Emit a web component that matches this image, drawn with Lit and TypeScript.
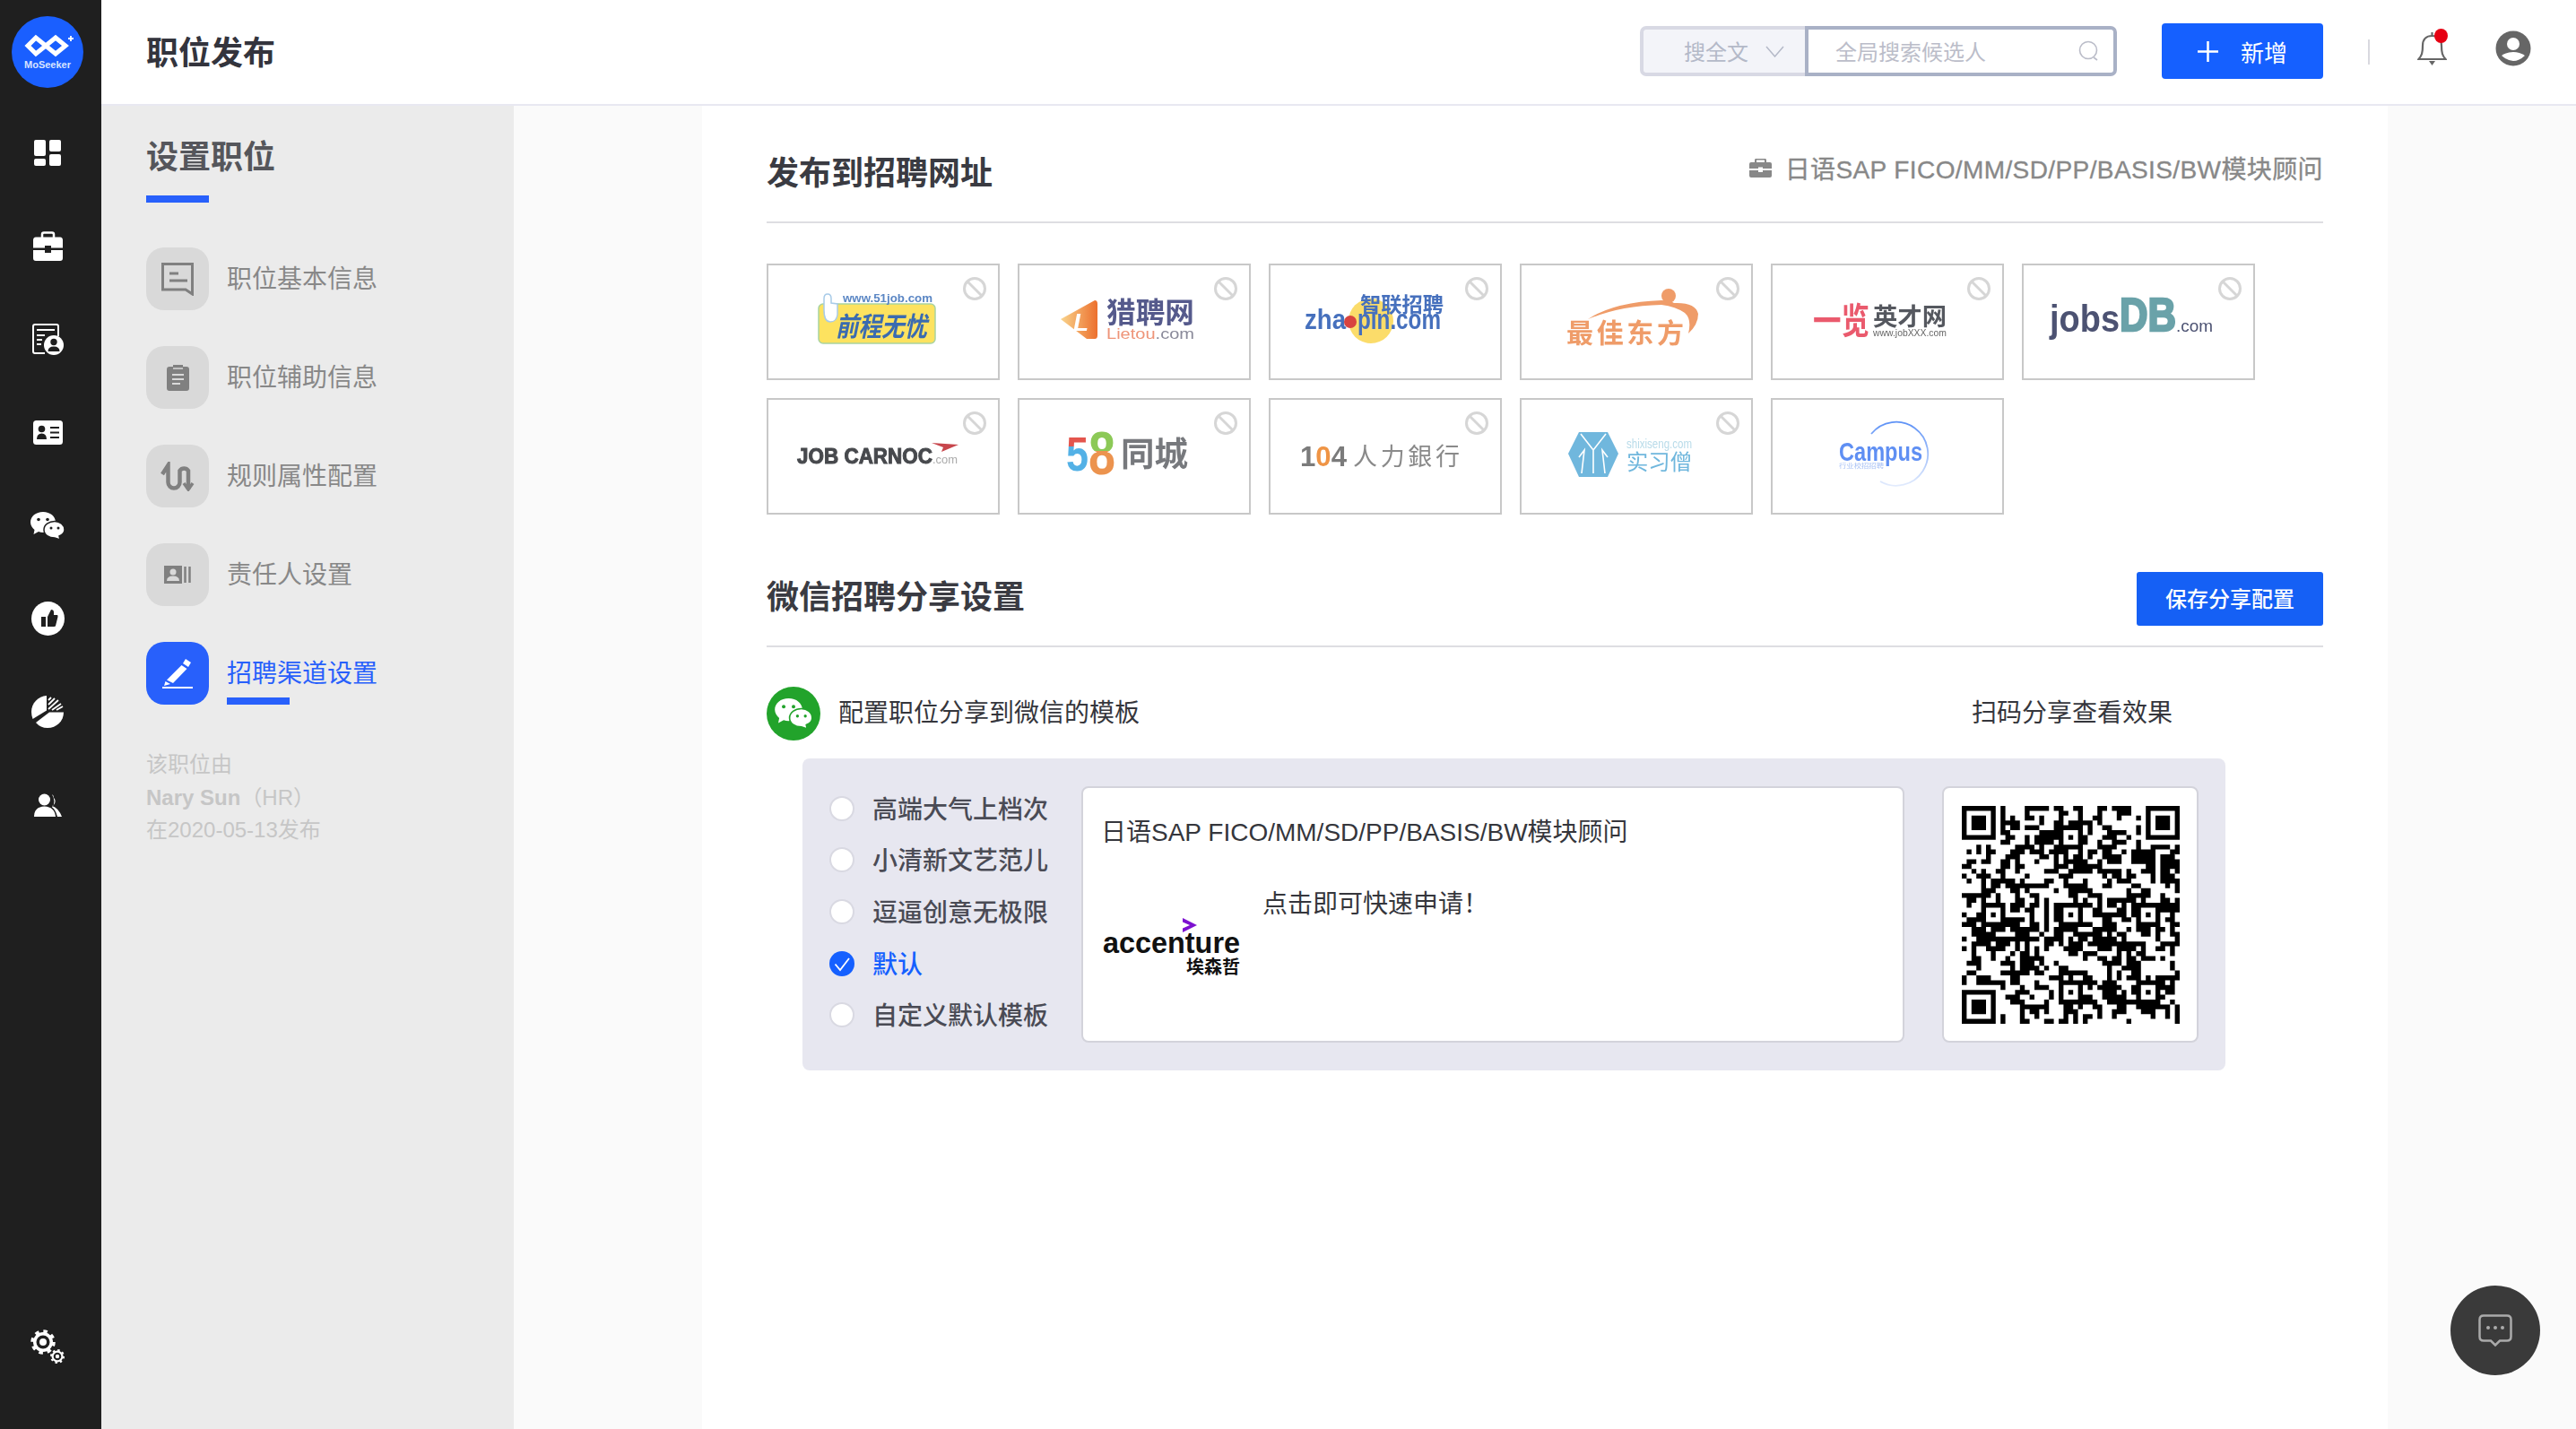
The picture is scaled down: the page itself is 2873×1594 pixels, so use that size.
import { LitElement, html, css, svg } from "lit";
import { customElement } from "lit/decorators.js";

function qrPath(): string {
  const n = 45;
  const grid: number[][] = [];
  let s = 20200513;
  const rnd = () => {
    s = (s * 1664525 + 1013904223) >>> 0;
    return (s >>> 8) / 16777216;
  };
  for (let y = 0; y < n; y++) {
    grid.push([]);
    for (let x = 0; x < n; x++) {
      const left = x ? grid[y][x - 1] : 0;
      const up = y ? grid[y - 1][x] : 0;
      const p = 0.34 + 0.16 * left + 0.16 * up;
      grid[y].push(rnd() < p ? 1 : 0);
    }
  }
  const block = (ox: number, oy: number, size: number, fn: (x: number, y: number) => number) => {
    for (let y = 0; y < size; y++) for (let x = 0; x < size; x++) {
      const gy = oy + y, gx = ox + x;
      if (gy >= 0 && gx >= 0 && gy < n && gx < n) grid[gy][gx] = fn(x, y);
    }
  };
  const finder = (x: number, y: number) => {
    const d = Math.max(Math.abs(x - 3), Math.abs(y - 3));
    return d === 3 || d <= 1 ? 1 : 0;
  };
  const finderQuiet = (x: number, y: number) => (x > 0 && y > 0 && x < 8 && y < 8 ? finder(x - 1, y - 1) : 0);
  block(-1, -1, 9, finderQuiet);
  block(n - 8, -1, 9, finderQuiet);
  block(-1, n - 8, 9, finderQuiet);
  const align = (x: number, y: number) => {
    const d = Math.max(Math.abs(x - 2), Math.abs(y - 2));
    return d === 2 || d === 0 ? 1 : 0;
  };
  for (const [cx, cy] of [[22, 6], [6, 22], [22, 22], [38, 22], [22, 38], [38, 38]])
    block(cx - 2, cy - 2, 5, align);
  let d = "";
  for (let y = 0; y < n; y++) for (let x = 0; x < n; x++)
    if (grid[y][x]) d += `M${x} ${y}h1v1h-1z`;
  return d;
}

const SITES = [
  svg`<rect x="58" y="45" width="130" height="44" rx="5" fill="#fde25f" stroke="#a9d3a0" stroke-width="1.5"/>
    <path d="M64 52V39q0-5 4-5t4 5v5l7 1v12q-1 8-8 8t-7-13z" fill="#fff" stroke="#a8cbe8" stroke-width="1.5"/>
    <text class="b" x="85" y="43" font-size="12" fill="#5a86c4" textLength="100" lengthAdjust="spacingAndGlyphs">www.51job.com</text>
    <text class="b i" x="77" y="81" font-size="30" fill="#3a6bb0" textLength="102" lengthAdjust="spacingAndGlyphs">前程无忧</text>`,
  svg`<defs><linearGradient id="lp" x1="0" x2="1"><stop offset="0" stop-color="#f9d48c"/><stop offset="1" stop-color="#ec6f2d"/></linearGradient></defs>
    <path d="M48 62 86 41q3 0 3 4V80q0 4-3 4L77 84Z" fill="url(#lp)"/>
    <text class="b i" x="62" y="75" font-size="28" fill="#fff">L</text>
    <text class="b" x="99" y="66" font-size="32" fill="#555a8c" textLength="98" lengthAdjust="spacingAndGlyphs">猎聘网</text>
    <text x="99" y="84" font-size="17" fill="#ee9478" textLength="98" lengthAdjust="spacingAndGlyphs">Lietou<tspan fill="#8a8a9a">.com</tspan></text>`,
  svg`<circle cx="114" cy="64" r="25" fill="#fbdc6a"/>
    <text class="b" x="102" y="54" font-size="23" fill="#4670bd" textLength="93" lengthAdjust="spacingAndGlyphs">智联招聘</text>
    <text class="b" x="40" y="73" font-size="32" fill="#4670bd" textLength="46" lengthAdjust="spacingAndGlyphs">zha</text>
    <circle cx="91" cy="65" r="7" fill="#d8433f"/>
    <text class="b" x="99" y="73" font-size="32" fill="#4670bd" textLength="93" lengthAdjust="spacingAndGlyphs">pin.com</text>`,
  svg`<path d="M76 62Q105 43 158 41Q168 41 172 44Q196 43 199 56Q199 68 188 78Q192 62 184 55Q174 48 158 46Q112 47 76 62Z" fill="#ef9c69"/>
    <circle cx="166" cy="36" r="8" fill="#ef9c69"/>
    <text class="b" x="52" y="88" font-size="30" fill="#ef9c69" textLength="131">最佳东方</text>`,
  svg`<text class="b" x="47" y="78" font-size="40" fill="#ea5a6d" textLength="63" lengthAdjust="spacingAndGlyphs">一览</text>
    <text class="b" x="114" y="69" font-size="27" fill="#55585f" textLength="82" lengthAdjust="spacingAndGlyphs">英才网</text>
    <text x="114" y="81" font-size="10" fill="#666" textLength="82" lengthAdjust="spacingAndGlyphs">www.jobXXX.com</text>`,
  svg`<text class="b" x="31" y="76" font-size="43" fill="#4c5272" textLength="78" lengthAdjust="spacingAndGlyphs">jobs</text>
    <text class="b" x="109" y="75" font-size="52" fill="#6aa2a9" stroke="#6aa2a9" stroke-width="2.5" textLength="63" lengthAdjust="spacingAndGlyphs">DB</text>
    <text x="172" y="76" font-size="19" fill="#4c5272" textLength="41" lengthAdjust="spacingAndGlyphs">.com</text>`,
  svg`<text class="b" x="34" y="73" font-size="24" fill="#47494d" stroke="#47494d" stroke-width="1" textLength="151" lengthAdjust="spacingAndGlyphs">JOB CARNOC</text>
    <path d="M184 50 214 52 195 60 197 55Z" fill="#c7464c"/>
    <text x="185" y="73" font-size="13" fill="#aaa" textLength="28" lengthAdjust="spacingAndGlyphs">.com</text>`,
  svg`<defs>
      <linearGradient id="f5" x1="0" x2="0" y1="0" y2="1"><stop offset=".36" stop-color="#e4554d"/><stop offset=".36" stop-color="#53b1e6"/></linearGradient>
      <linearGradient id="f8" x1="0" x2="0" y1="0" y2="1"><stop offset=".48" stop-color="#8cc957"/><stop offset=".48" stop-color="#ec934e"/></linearGradient></defs>
    <text class="b" x="54" y="81" font-size="54" fill="url(#f5)" textLength="25" lengthAdjust="spacingAndGlyphs">5</text>
    <text class="b" x="79" y="85" font-size="68" fill="url(#f8)" textLength="30" lengthAdjust="spacingAndGlyphs">8</text>
    <text class="b" x="115" y="76" font-size="37" fill="#77797d" textLength="75" lengthAdjust="spacingAndGlyphs">同城</text>`,
  svg`<text class="b" x="35" y="76" font-size="31" fill="#7b7b7b" textLength="52" lengthAdjust="spacingAndGlyphs">1<tspan fill="#ef9445">0</tspan>4</text>
    <text x="94" y="75" font-size="27" fill="#8a8a8a" textLength="119">人力銀行</text>`,
  svg`<path d="M66 38H98L110 62 98 88H66L54 62Z" fill="#70b7dd"/>
    <path d="M68 40 82 58 96 40M66 66 72 58 69 84M98 66 92 58 95 84M82 58V84" fill="none" stroke="#fff" stroke-width="1.6"/>
    <text x="119" y="56" font-size="14" fill="#b8dbe9" textLength="73" lengthAdjust="spacingAndGlyphs">shixiseng.com</text>
    <text x="119" y="80" font-size="24" fill="#70b7dd" textLength="73" lengthAdjust="spacingAndGlyphs">实习僧</text>`,
  svg`<defs><linearGradient id="cp" x1="0" x2="0" y1="0" y2="1"><stop offset="0" stop-color="#5e92f6"/><stop offset="1" stop-color="#e2ebfd"/></linearGradient></defs>
    <path d="M112 40A35.500 35.500 0 1 1 122 93" fill="none" stroke="url(#cp)" stroke-width="1.8"/>
    <text class="b" x="76" y="70" font-size="30" fill="#5f8ff3" textLength="93" lengthAdjust="spacingAndGlyphs">Campus</text>
    <text x="76" y="78" font-size="7" fill="#a9c2f5" textLength="50" lengthAdjust="spacingAndGlyphs">行业校招招聘</text>`,
];

const NAV_ICONS = [
  html`<svg width="30" height="29" viewBox="0 0 30 29" fill="#fff"><rect width="13" height="18" rx="2"/><rect x="17" width="13" height="13" rx="2"/><rect y="21" width="13" height="8" rx="2"/><rect x="17" y="16" width="13" height="13" rx="2"/></svg>`,
  html`<svg width="33" height="33" viewBox="0 0 33 33" fill="#fff"><path d="M10 7V3.500Q10 1.500 12 1.500H21Q23 1.500 23 3.500V7" fill="none" stroke="#fff" stroke-width="2.500"/><path d="M0 10Q0 6.500 3 6.500H30Q33 6.500 33 10V18.500H20V16H13V18.500H0Z"/><path d="M0 21H13V24H20V21H33V30Q33 33 30 33H3Q0 33 0 30Z"/></svg>`,
  html`<svg width="35" height="35" viewBox="0 0 35 35"><path d="M14 33H3Q1 33 1 31V3Q1 1 3 1H27Q29 1 29 3V14" fill="none" stroke="#fff" stroke-width="2"/><path d="M5 7H25M5 13H14M5 18H11M5 23H10" stroke="#fff" stroke-width="2.200"/><circle cx="24" cy="24" r="11" fill="#fff"/><circle cx="24" cy="20.500" r="3.700" fill="#1f1f1f"/><path d="M17.500 31Q17.500 25.500 24 25.500T30.500 31Z" fill="#1f1f1f"/></svg>`,
  html`<svg width="33" height="27" viewBox="0 0 33 27"><rect width="33" height="27" rx="3.500" fill="#fff"/><circle cx="9.500" cy="9.500" r="3.800" fill="#1f1f1f"/><path d="M4 21Q4 14.500 9.500 14.500T15 21Z" fill="#1f1f1f"/><path d="M19 8H29M19 13.500H29M19 19H29" stroke="#1f1f1f" stroke-width="2"/></svg>`,
  html`<svg width="38" height="31" viewBox="0 0 38 31"><path d="M14 0C6 0 0 5 0 11.500 0 15 2 18 4.500 20L3.500 25 9 22Q11.500 23 14 23C22 23 28 18 28 11.500S22 0 14 0Z" fill="#fff"/><circle cx="9" cy="8.500" r="1.800" fill="#1f1f1f"/><circle cx="19" cy="8.500" r="1.800" fill="#1f1f1f"/><path d="M27 10.500C20.500 10.500 15 14.500 15 20S20.500 29 27 29L33 31 32 27C35.500 25.500 38 23 38 20 38 14.500 33 10.500 27 10.500Z" fill="#fff" stroke="#1f1f1f" stroke-width="1.500"/><circle cx="23" cy="18" r="1.500" fill="#1f1f1f"/><circle cx="31" cy="18" r="1.500" fill="#1f1f1f"/></svg>`,
  html`<svg width="37" height="38" viewBox="0 0 37 38"><ellipse cx="18.500" cy="19" rx="18.500" ry="19" fill="#fff"/><path d="M11 17H16V28H11ZM18 17 22 9Q25 9 25 12V15H29Q29.500 15 29.500 17L27 27Q27 28 25 28H18Z" fill="#1f1f1f"/></svg>`,
  html`<svg width="36" height="36" viewBox="0 0 36 36"><path d="M17 0V16.500L1.500 26Q0 22 0 18C0 8.500 7.500 .5 17 0Z" fill="#fff"/><path d="M20 18.500H36C36 28.500 28 36 18 36Q10 36 5 30Z" fill="#fff"/><g stroke="#fff" stroke-width="1.800"><path d="M19 5 22 2M19 10 26 3M19 15 30 5M23 16 33 9M28 16 35 12"/></g></svg>`,
  html`<svg width="31" height="26" viewBox="0 0 31 26" fill="#fff"><path d="M22 5A5.500 5.500 0 0 1 20 14Q27 16 31 26H26Q24 18 20 15.500 25 10 20 1Q22 2 22 5Z"/><circle cx="11.500" cy="7" r="6.500"/><path d="M0 26Q0 15 11.500 14.500 23 15 24 26Z"/></svg>`,
];

const MENU = [
  { t: "职位基本信息", i: html`<svg width="36" height="37" viewBox="0 0 36 37" fill="none" stroke="#808080" stroke-width="3"><path d="M1.500 1.500H34.500V35L27 30H1.500Z"/><path d="M9 12H19M9 20H29"/></svg>` },
  { t: "职位辅助信息", i: html`<svg width="25" height="29" viewBox="0 0 25 29"><path d="M3 2H7V0H18V2H22Q25 2 25 5V26Q25 29 22 29H3Q0 29 0 26V5Q0 2 3 2Z" fill="#808080"/><path d="M6 11H19M6 16H19M6 21H15" stroke="#d9d9d9" stroke-width="2"/><path d="M7 4H18" stroke="#d9d9d9" stroke-width="1.500"/></svg>` },
  { t: "规则属性配置", i: html`<svg width="38" height="33" viewBox="0 0 38 33" fill="none" stroke="#808080" stroke-width="4.500"><path d="M2 14 8.500 4V23A6.500 6.500 0 0 0 21.500 23V10A5.800 5.800 0 0 1 31 10V31"/><path d="M26 24 31 31 36 24" stroke-width="3.500"/></svg>` },
  { t: "责任人设置", i: html`<svg width="30" height="20" viewBox="0 0 30 20"><rect width="20" height="20" fill="#808080"/><circle cx="10" cy="7" r="3.500" fill="#d9d9d9"/><path d="M3 17Q3 11.500 10 11.500T17 17Z" fill="#d9d9d9"/><path d="M23.500 1V19M28.500 1V19" stroke="#808080" stroke-width="2.500"/></svg>` },
  { t: "招聘渠道设置", i: html`<svg width="34" height="33" viewBox="0 0 34 33" fill="#fff"><path d="M26 0 32 4 29 9 23 5ZM21.500 7 27.500 11 12 27 5 23.500Z"/><path d="M3.500 25 9 28 2 30Z"/><rect y="31" width="34" height="2"/></svg>`, active: true },
];

const OPTIONS = ["高端大气上档次", "小清新文艺范儿", "逗逼创意无极限", "默认", "自定义默认模板"];

@customElement("app-root")
export class AppRoot extends LitElement {
  static styles = css`
    :host { display: flex; width: 100%; height: 100vh; overflow: hidden; font-family: "Liberation Sans", "Noto Sans CJK SC", sans-serif; color: #333; }
    * { box-sizing: border-box; }
    .rail { width: 113px; flex: none; background: #1f1f1f; display: flex; flex-direction: column; align-items: center; padding-right: 7px; }
    .brand { height: 118px; display: flex; align-items: center; justify-content: center; padding-bottom: 2px; }
    .rail-item { height: 104px; flex: none; display: flex; align-items: center; justify-content: center; }
    .rail-gear { margin-top: auto; margin-bottom: 40px; }
    .brand text { font-family: "Liberation Sans", sans-serif; }
    .col { flex: 1; min-width: 0; display: flex; flex-direction: column; }
    .top { height: 118px; flex: none; background: #fff; border-bottom: 2px solid #e8e8f1; display: flex; align-items: center; padding-left: 50px; padding-right: 50px; }
    .page-title { font-size: 36px; font-weight: 700; color: #33343d; line-height: 1; margin-top: 3px; }
    .search { margin-left: auto; display: flex; height: 56px; margin-top: -2px; font-size: 24px; }
    .search span { margin-top: -2px; }
    .search-type { width: 184px; background: #f3f4f9; border: 4px solid #d8d9e4; border-right: 0; border-radius: 7px 0 0 7px; display: flex; align-items: center; padding-left: 45px; gap: 19px; color: #b4b9c8; }
    .search-input { width: 348px; border: 4px solid #a9b1c6; border-radius: 0 7px 7px 0; display: flex; align-items: center; justify-content: space-between; padding: 0 15px 0 30px; color: #bbbdc9; }
    .add { margin-left: 50px; width: 180px; height: 62px; background: #1560ff; border-radius: 4px; color: #fff; font-size: 26px; display: flex; align-items: center; justify-content: center; gap: 25px; margin-top: -2px; }
    .vr { width: 2px; height: 28px; background: #d9d9df; margin-left: 50px; }
    .bell { position: relative; margin-left: 53px; display: flex; margin-top: -8px; }
    .dot { position: absolute; top: -3px; right: -1px; width: 15px; height: 16px; border-radius: 50%; background: #e60012; }
    .avatar { margin-left: 54px; display: flex; margin-top: -8px; }
    .body { flex: 1; display: flex; min-height: 0; }
    .panel { width: 460px; flex: none; background: #ebebeb; padding: 0 50px; }
    .panel-title { margin-top: 40px; font-size: 36px; line-height: 36px; font-weight: 700; color: #55565b; }
    .panel-bar { width: 70px; height: 8px; background: #2860fb; margin-top: 24px; }
    .menu { margin-top: 50px; display: flex; flex-direction: column; gap: 40px; }
    .menu-item { display: flex; gap: 20px; height: 70px; color: #888; font-size: 28px; }
    .menu-icon { width: 70px; height: 70px; border-radius: 20px; background: #d9d9d9; display: flex; align-items: center; justify-content: center; }
    .menu-text { position: relative; line-height: 70px; height: 70px; width: 170px; margin-top: 1px; }
    .active { color: #2860fb; }
    .active .menu-icon { background: #2860fb; }
    .active .menu-text::after { content: ""; position: absolute; left: 0; bottom: 1px; width: 70px; height: 8px; background: #2860fb; }
    .meta { margin-top: 49px; font-size: 24px; line-height: 36.500px; color: #c6c6c6; }
    .meta b { font-weight: 700; }
    .gutter { width: 210px; flex: none; background: #fafafa; }
    .main { width: 1880px; flex: none; background: #fff; padding: 0 72px; }
    .head { display: flex; align-items: center; justify-content: space-between; border-bottom: 2px solid #dedee2; }
    .head-a { height: 131px; padding-top: 22px; }
    .head-b { height: 86px; margin-top: 62px; padding-bottom: 20px; }
    .head h2 { margin: 0; font-size: 36px; font-weight: 700; line-height: 1; color: #3a3b42; }
    .job { display: flex; align-items: center; gap: 15px; font-size: 28px; color: #888; margin-top: -13px; letter-spacing: .4px; -webkit-text-stroke: .35px #888; }
    .tiles { display: grid; grid-template-columns: repeat(6, 260px); gap: 20px; margin-top: 45px; }
    .tile { position: relative; width: 260px; height: 130px; box-shadow: inset 0 0 0 2px #c8c8c8; }
    .logo { display: block; filter: blur(.7px); }
    .logo text { font-family: "Liberation Sans", "Noto Sans CJK SC", sans-serif; }
    .logo .b { font-weight: 700; }
    .logo .i { font-style: italic; }
    .ban { position: absolute; top: 15px; right: 15px; display: block; }
    .save { width: 208px; height: 60px; background: #1560f5; color: #fff; border-radius: 3px; font-size: 24px; font-weight: 500; display: flex; align-items: center; justify-content: center; padding-bottom: 3px; }
    .head-b h2 { margin-top: -2px; }
    .share { margin-top: 44px; height: 60px; display: flex; align-items: center; font-size: 28px; color: #35363c; }
    .share span { margin-top: -6px; }
    .wx { width: 60px; height: 60px; border-radius: 50%; background: #22a32b; display: flex; align-items: center; justify-content: center; margin-right: 20px; }
    .scan { margin-left: auto; margin-right: 168px; }
    .tpl { margin: 20px 0 0 40px; width: 1587px; height: 348px; background: #e7e7f0; border-radius: 8px; display: flex; padding: 31px 30px 31px 31px; }
    .opts { width: 280px; flex: none; height: 288px; margin-top: -4px; display: flex; flex-direction: column; }
    .opt { flex: 1; display: flex; align-items: center; gap: 20px; font-size: 28px; font-weight: 500; color: #4a4b55; }
    .opt span:last-child { margin-top: -2px; }
    .radio { width: 28px; height: 28px; border-radius: 50%; background: #fff; border: 2px solid #d9d9e2; flex: none; margin-left: -1px; }
    .opt.on { color: #1560ff; }
    .opt.on svg { flex: none; display: block; margin-left: -1px; }
    .card { background: #fff; border: 2px solid #d3d3db; border-radius: 8px; }
    .preview { width: 918px; padding: 30px 20px 0; font-size: 28px; color: #35363c; }
    .preview-title { line-height: 40px; }
    .preview-row { display: flex; gap: 25px; margin-top: 40px; align-items: flex-start; }
    .acc { margin-top: 32px; margin-left: 2px; display: block; flex: none; }
    .acc text { font-family: "Liberation Sans", "Noto Sans CJK SC", sans-serif; font-weight: 700; fill: #111; }
    .apply { line-height: 40px; }
    .qr { width: 286px; height: 286px; margin-left: 42px; flex: none; display: flex; align-items: center; justify-content: center; }
    .chat { position: absolute; right: 40px; bottom: 60px; width: 100px; height: 100px; border-radius: 50%; background: #3a3a3a; display: flex; align-items: center; justify-content: center; }
  `;

  render() {
    const ban = html`<svg class="ban" width="26" height="26" viewBox="0 0 26 26" fill="none" stroke="#d6d6d6" stroke-width="3"><circle cx="13" cy="13" r="11.500"/><path d="M5 5 21 21"/></svg>`;
    return html`
      <nav class="rail">
        <div class="brand">
          <svg width="80" height="80" viewBox="0 0 80 80">
            <circle cx="40" cy="40" r="40" fill="#1a5fff"/>
            <path d="M18 33 27 24 38 33 49 24 60 33 49 42 38 33 27 42Z" fill="none" stroke="#fff" stroke-width="5"/>
            <path d="M66 22V28M63 25H69" stroke="#fff" stroke-width="1.800"/>
            <text x="40" y="58" font-size="11" font-weight="700" fill="#d7e4ff" text-anchor="middle">MoSeeker</text>
          </svg>
        </div>
        ${NAV_ICONS.map((i) => html`<div class="rail-item">${i}</div>`)}
        <div class="rail-item rail-gear">
          <svg width="38" height="38" viewBox="0 0 38 38" fill="none">
            <circle cx="14" cy="14" r="12" stroke="#fff" stroke-width="3.500" stroke-dasharray="4.500 4.925"/>
            <circle cx="14" cy="14" r="11" fill="#fff"/><circle cx="14" cy="14" r="7.500" fill="#1f1f1f"/><circle cx="14" cy="14" r="4" fill="#fff"/>
            <circle cx="30" cy="30" r="7" stroke="#fff" stroke-width="2" stroke-dasharray="2.500 2.998"/>
            <circle cx="30" cy="30" r="6.500" fill="#fff"/><circle cx="30" cy="30" r="4.300" fill="#1f1f1f"/><circle cx="30" cy="30" r="2.200" fill="#fff"/>
          </svg>
        </div>
      </nav>
      <div class="col">
        <header class="top">
          <div class="page-title">职位发布</div>
          <div class="search">
            <div class="search-type"><span>搜全文</span>
              <svg width="21" height="13" viewBox="0 0 21 13" fill="none" stroke="#b4b9c8" stroke-width="1.500"><path d="M1 1 10.500 12 20 1"/></svg></div>
            <div class="search-input"><span>全局搜索候选人</span>
              <svg width="24" height="24" viewBox="0 0 24 24" fill="none" stroke="#babcc8" stroke-width="1.600"><circle cx="11" cy="11" r="9.500"/><path d="M17 19 21 22"/></svg></div>
          </div>
          <div class="add">
            <svg width="23" height="23" viewBox="0 0 23 23" stroke="#fff" stroke-width="2.500"><path d="M11.500 0V23M0 11.500H23"/></svg>
            <span>新增</span>
          </div>
          <div class="vr"></div>
          <div class="bell">
            <svg width="33" height="38" viewBox="0 0 33 38" fill="none" stroke="#666" stroke-width="2.200"><path d="M1.500 31C5 27 6 24 6 16 6 9 10 5 16.500 5S27 9 27 16C27 24 28 27 31.500 31Z"/><path d="M16.500 1V5"/><path d="M13 33H20L16.500 38Z" fill="#666" stroke="none"/></svg>
            <span class="dot"></span>
          </div>
          <div class="avatar">
            <svg width="40" height="40" viewBox="0 0 40 40"><circle cx="20" cy="20" r="19.500" fill="#666"/><circle cx="20" cy="15" r="7" fill="#fff"/><path d="M7 28Q20 40 33 28Q27 24 20 24T7 28Z" fill="#fff"/></svg>
          </div>
        </header>
        <div class="body">
          <aside class="panel">
            <div class="panel-title">设置职位</div>
            <div class="panel-bar"></div>
            <div class="menu">
              ${MENU.map((m) => html`<div class="menu-item ${m.active ? "active" : ""}"><div class="menu-icon">${m.i}</div><div class="menu-text">${m.t}</div></div>`)}
            </div>
            <div class="meta">该职位由<br /><b>Nary Sun</b>（HR）<br />在2020-05-13发布</div>
          </aside>
          <div class="gutter"></div>
          <main class="main">
            <div class="head head-a">
              <h2>发布到招聘网址</h2>
              <div class="job">
                <svg width="25" height="21" viewBox="0 0 25 21" fill="#888" stroke="none"><path d="M7 4V2Q7 .5 8.500 .5H16.500Q18 .5 18 2V4" fill="none" stroke="#888" stroke-width="2"/><path d="M0 6Q0 4 2 4H23Q25 4 25 6V11H15V9.500H10V11H0ZM0 13H10V15H15V13H25V19Q25 21 23 21H2Q0 21 0 19Z"/></svg>
                <span>日语SAP FICO/MM/SD/PP/BASIS/BW模块顾问</span>
              </div>
            </div>
            <div class="tiles">
              ${SITES.map((s, i) => html`<div class="tile"><svg class="logo" width="260" height="130" viewBox="0 0 260 130">${s}</svg>${i !== 10 ? ban : ""}</div>`)}
            </div>
            <div class="head head-b">
              <h2>微信招聘分享设置</h2>
              <div class="save">保存分享配置</div>
            </div>
            <div class="share">
              <div class="wx"><svg width="42" height="34" viewBox="0 0 38 31"><path d="M14 0C6 0 0 5 0 11.500 0 15 2 18 4.500 20L3.500 25 9 22Q11.500 23 14 23C22 23 28 18 28 11.500S22 0 14 0Z" fill="#fff"/><circle cx="9" cy="8.500" r="1.800" fill="#22a32b"/><circle cx="19" cy="8.500" r="1.800" fill="#22a32b"/><path d="M27 10.500C20.500 10.500 15 14.500 15 20S20.500 29 27 29L33 31 32 27C35.500 25.500 38 23 38 20 38 14.500 33 10.500 27 10.500Z" fill="#fff" stroke="#22a32b" stroke-width="1.500"/><circle cx="23" cy="18" r="1.500" fill="#22a32b"/><circle cx="31" cy="18" r="1.500" fill="#22a32b"/></svg></div>
              <span>配置职位分享到微信的模板</span>
              <span class="scan">扫码分享查看效果</span>
            </div>
            <div class="tpl">
              <div class="opts">
                ${OPTIONS.map((o, i) => i === 3
                  ? html`<div class="opt on"><svg width="28" height="28" viewBox="0 0 28 28"><circle cx="14" cy="14" r="14" fill="#1560ff"/><path d="M6.500 14.500 12 21 22 8" fill="none" stroke="#fff" stroke-width="1.800"/></svg><span>${o}</span></div>`
                  : html`<div class="opt"><span class="radio"></span><span>${o}</span></div>`)}
              </div>
              <div class="card preview">
                <div class="preview-title">日语SAP FICO/MM/SD/PP/BASIS/BW模块顾问</div>
                <div class="preview-row">
                  <svg class="acc" width="153" height="72" viewBox="0 0 153 72">
                    <path d="M89 3 105 11 89 19V14.500L97 11 89 7.500Z" fill="#7c10d0"/>
                    <text x="0" y="42" font-size="32.500" textLength="153" lengthAdjust="spacingAndGlyphs">accenture</text>
                    <text x="153" y="65" font-size="20" text-anchor="end">埃森哲</text>
                  </svg>
                  <div class="apply">点击即可快速申请！</div>
                </div>
              </div>
              <div class="card qr">
                <svg width="243" height="243" viewBox="0 0 45 45" fill="#000"><path d="${qrPath()}"/></svg>
              </div>
            </div>
          </main>
          <div class="gutter"></div>
        </div>
      </div>
      <div class="chat">
        <svg width="38" height="36" viewBox="0 0 38 36" fill="none" stroke="#aaa" stroke-width="2.500"><path d="M6 1.500H32Q36.500 1.500 36.500 6V25Q36.500 29.500 32 29.500H24L19 34.500 14 29.500H6Q1.500 29.500 1.500 25V6Q1.500 1.500 6 1.500Z"/><g fill="#aaa" stroke="none"><circle cx="11" cy="15" r="2"/><circle cx="19" cy="15" r="2"/><circle cx="27" cy="15" r="2"/></g></svg>
      </div>
    `;
  }
}
